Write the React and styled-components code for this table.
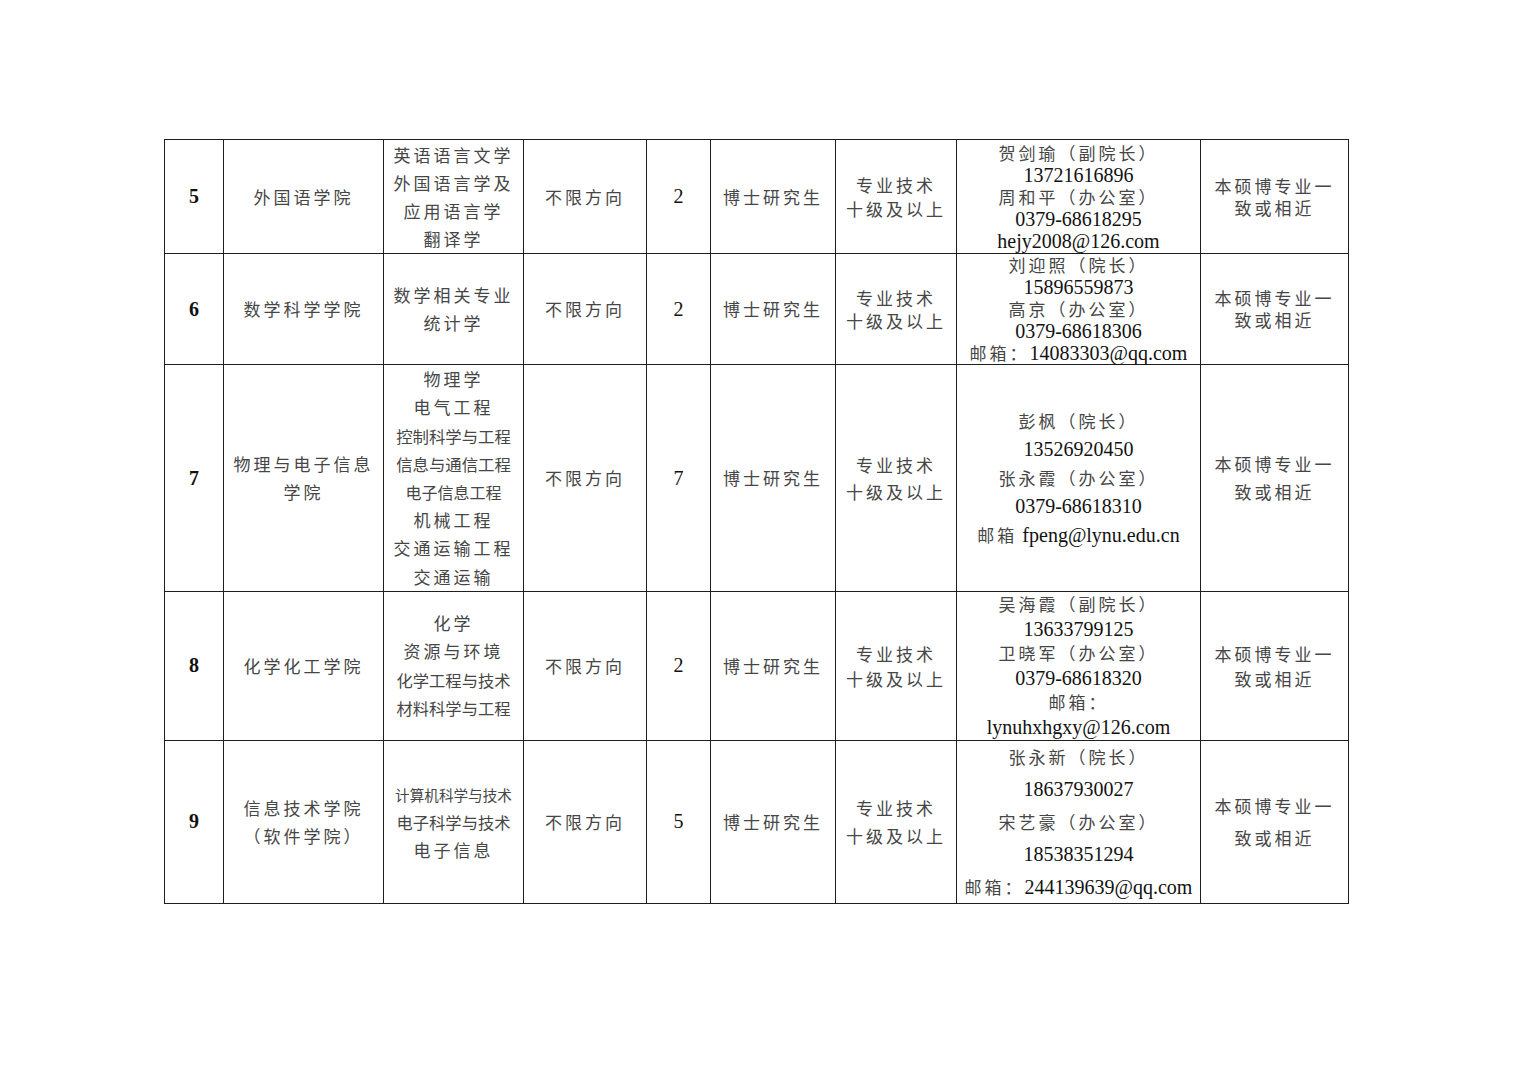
import React from "react";
import styled, { createGlobalStyle } from "styled-components";

const GlobalStyle = createGlobalStyle`
  html, body {
    margin: 0;
    padding: 0;
    background: #fff;
  }
`;

const Page = styled.div`
  min-height: 1080px;
  padding: 139px 0 0 164px;
  box-sizing: border-box;
`;

const Sheet = styled.table`
  border-collapse: collapse;
  table-layout: fixed;
  width: 1184px;
  font-family: "Liberation Serif", "Noto Sans CJK SC", serif;
  font-size: 20px;
  color: #111;
`;

const Row = styled.tr`
  height: ${(p) => p.$h}px;
`;

const Cell = styled.td`
  border: 1px solid #1e1e1e;
  padding: 0;
  text-align: center;
  vertical-align: middle;
  font-weight: ${(p) => (p.$bold ? 700 : 400)};
`;

const Line = styled.div`
  height: ${(p) => p.$lh}px;
  line-height: ${(p) => p.$lh}px;
  white-space: nowrap;
`;

const Han = styled.span`
  font-family: "Noto Sans CJK SC", sans-serif;
  font-size: ${(p) => p.$fs || 17}px;
  letter-spacing: ${(p) => (p.$ls === undefined ? 3 : p.$ls)}px;
  color: #464646;
  font-weight: 400;
`;

const cols = [59, 160, 140, 123, 64, 125, 121, 244, 148];

const HAN = /([\u3000-\u303f\u3400-\u9fff\uff00-\uffef]+)/;

// a line is a string, or [text, font size, letter spacing] for the squeezed ones
function Text({ line }) {
  const [text, fs, ls] = Array.isArray(line) ? line : [line];
  return text
    .split(HAN)
    .filter(Boolean)
    .map((part, i) =>
      HAN.test(part) ? (
        <Han key={i} $fs={fs} $ls={ls}>
          {part}
        </Han>
      ) : (
        <span key={i}>{part}</span>
      )
    );
}

function Lines({ lines, lh }) {
  return lines.map((l, i) => (
    <Line key={i} $lh={lh}>
      <Text line={l} />
    </Line>
  ));
}

const rows = [
  {
    no: "5",
    h: 114,
    college: { lines: ["外国语学院"], lh: 28 },
    majors: { lines: ["英语语言文学", "外国语言学及", "应用语言学", "翻译学"], lh: 28 },
    count: "2",
    qual: 24,
    contact: {
      lines: ["贺剑瑜（副院长）", "13721616896", "周和平（办公室）", "0379-68618295", "hejy2008@126.com"],
      lh: 22,
    },
    req: 22,
  },
  {
    no: "6",
    h: 109,
    college: { lines: ["数学科学学院"], lh: 28 },
    majors: { lines: ["数学相关专业", "统计学"], lh: 28 },
    count: "2",
    qual: 23,
    contact: {
      lines: ["刘迎照（院长）", "15896559873", "高京（办公室）", "0379-68618306", "邮箱：14083303@qq.com"],
      lh: 22,
    },
    req: 22,
  },
  {
    no: "7",
    h: 227,
    college: { lines: ["物理与电子信息", "学院"], lh: 28 },
    majors: {
      lines: [
        "物理学",
        "电气工程",
        ["控制科学与工程", 16.4, 0],
        ["信息与通信工程", 16.4, 0],
        ["电子信息工程", 16, 0],
        "机械工程",
        "交通运输工程",
        "交通运输",
      ],
      lh: 28.2,
    },
    count: "7",
    qual: 27,
    contact: {
      lines: ["彭枫（院长）", "13526920450", "张永霞（办公室）", "0379-68618310", "邮箱 fpeng@lynu.edu.cn"],
      lh: 28.5,
    },
    req: 28,
  },
  {
    no: "8",
    h: 147,
    college: { lines: ["化学化工学院"], lh: 28 },
    majors: {
      lines: ["化学", "资源与环境", ["化学工程与技术", 16.3, 0], ["材料科学与工程", 16.3, 0]],
      lh: 28.3,
    },
    count: "2",
    qual: 25,
    contact: {
      lines: ["吴海霞（副院长）", "13633799125", "卫晓军（办公室）", "0379-68618320", "邮箱：", "lynuhxhgxy@126.com"],
      lh: 24.6,
    },
    req: 25,
  },
  {
    no: "9",
    h: 163,
    college: { lines: ["信息技术学院", "（软件学院）"], lh: 28 },
    majors: {
      lines: [["计算机科学与技术", 14.6, 0], ["电子科学与技术", 16.3, 0], "电子信息"],
      lh: 28,
    },
    count: "5",
    qual: 28,
    contact: {
      lines: ["张永新（院长）", "18637930027", "宋艺豪（办公室）", "18538351294", "邮箱：244139639@qq.com"],
      lh: 32.5,
    },
    req: 32,
  },
];

export default function App() {
  return (
    <Page>
      <GlobalStyle />
      <Sheet>
        <colgroup>
          {cols.map((w, i) => (
            <col key={i} style={{ width: w }} />
          ))}
        </colgroup>
        <tbody>
          {rows.map((r) => (
            <Row key={r.no} $h={r.h}>
              <Cell $bold>{r.no}</Cell>
              <Cell>
                <Lines {...r.college} />
              </Cell>
              <Cell>
                <Lines {...r.majors} />
              </Cell>
              <Cell>
                <Lines lines={["不限方向"]} lh={24} />
              </Cell>
              <Cell>{r.count}</Cell>
              <Cell>
                <Lines lines={["博士研究生"]} lh={24} />
              </Cell>
              <Cell>
                <Lines lines={["专业技术", "十级及以上"]} lh={r.qual} />
              </Cell>
              <Cell>
                <Lines {...r.contact} />
              </Cell>
              <Cell>
                <Lines lines={["本硕博专业一", "致或相近"]} lh={r.req} />
              </Cell>
            </Row>
          ))}
        </tbody>
      </Sheet>
    </Page>
  );
}
